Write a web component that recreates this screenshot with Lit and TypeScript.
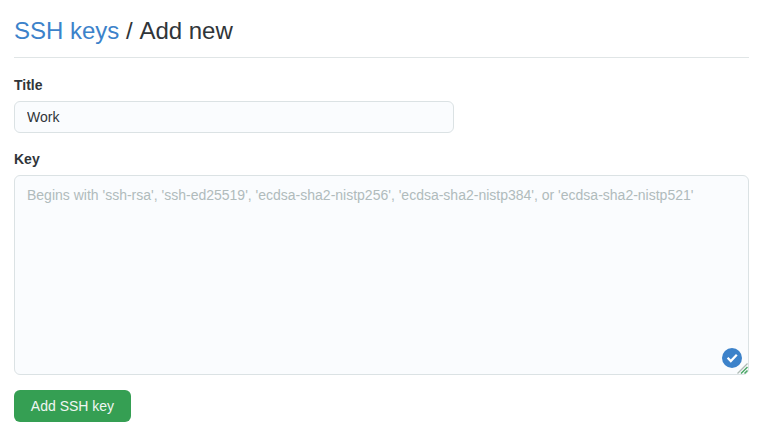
import { LitElement, html, css } from "lit";
import { customElement } from "lit/decorators.js";

@customElement("app-root")
export class AppRoot extends LitElement {
  static styles = css`
    :host { display: block; height: 437px; background: #fff; color: #303539; font-family: "Liberation Sans", Arial, sans-serif; font-size: 14px; box-sizing: border-box; padding: 14px 17px 0 14px; overflow: hidden; }
    * { box-sizing: border-box; }
    h1 { margin: 0; height: 44px; border-bottom: 1px solid #e0e5e6; font-size: 24px; line-height: 33px; font-weight: 400; font-kerning: none; }
    a { color: #3c82ca; text-decoration: none; }
    label { display: block; font-weight: 700; line-height: 20px; }
    .title-label { margin-top: 17px; }
    .key-label { margin-top: 16px; }
    .title-input { display: block; width: 440px; height: 32px; margin-top: 6px; padding: 0 12px; border: 1px solid #dbe2e4; border-radius: 6px; background: #fafcfe; color: #303539; font: 14px "Liberation Sans", Arial, sans-serif; }
    .key-box { position: relative; height: 200px; margin-top: 6px; border: 1px solid #dbe2e4; border-radius: 6px; background: #fafcfe; padding: 9px 12px; line-height: 21px; color: #b0bbbc; white-space: nowrap; }
    .check { position: absolute; right: 6px; bottom: 6px; width: 20px; height: 20px; }
    .grip { position: absolute; right: 0; bottom: 0; width: 11px; height: 11px; }
    button { display: block; margin: 15px 0 0; width: 117px; height: 32px; padding: 0; border: 0; border-radius: 6px; background: #359f53; color: #f0f6f2; font: 14px "Liberation Sans", Arial, sans-serif; }
  `;
  render() {
    return html`
      <h1><a>SSH keys</a> / Add new</h1>
      <label class="title-label">Title</label>
      <input class="title-input" .value=${"Work"} />
      <label class="key-label">Key</label>
      <div class="key-box">
        Begins with 'ssh-rsa', 'ssh-ed25519', 'ecdsa-sha2-nistp256', 'ecdsa-sha2-nistp384', or 'ecdsa-sha2-nistp521'
        <svg class="check" viewBox="0 0 20 20"><circle cx="10" cy="10" r="10" fill="#3c82ca"/><path d="M5.6 9.8l3.2 3.2 6-6.2" fill="none" stroke="#fff" stroke-width="2.3"/></svg>
        <svg class="grip" viewBox="0 0 11 11"><path d="M0.5 10.5L10.5 0.5" stroke="#aebbb5" stroke-width="1.2"/><path d="M4 10.5L10.5 4M7.5 10.5L10.5 7.5" stroke="#4ba766" stroke-width="1.5"/></svg>
      </div>
      <button>Add SSH key</button>
    `;
  }
}
